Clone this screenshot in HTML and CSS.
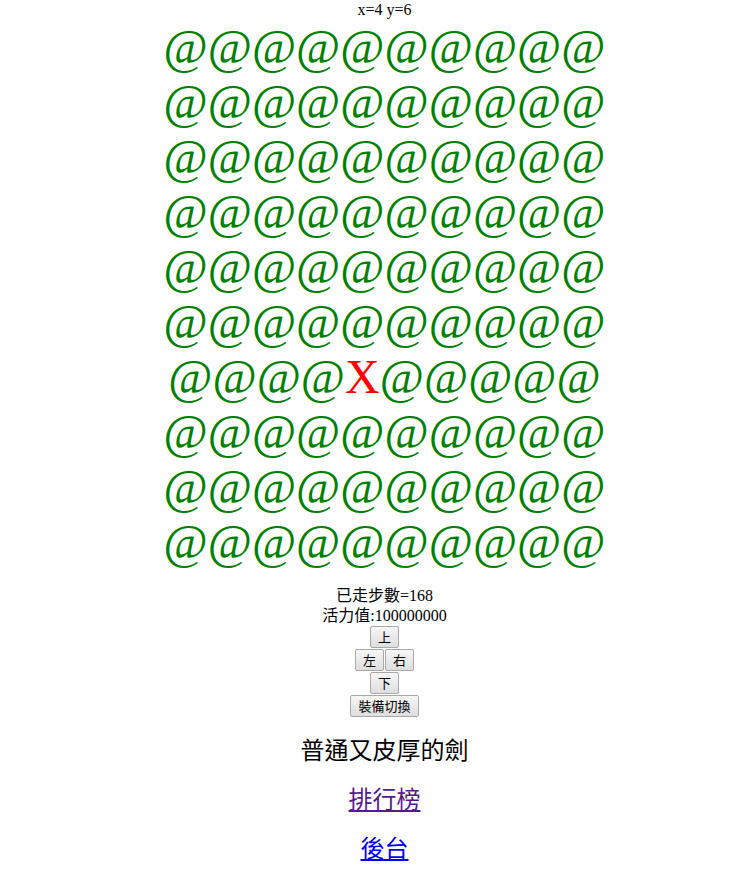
FILE: index.html
```html
<!DOCTYPE html>
<html>
<head>
<meta charset="utf-8">
<link rel="stylesheet" href="styles.css">
</head>
<body>
<div class="page">
  <div class="pos">x=4 y=6</div>
  <div class="grid">
    <div class="row"><span class="c">@</span><span class="c">@</span><span class="c">@</span><span class="c">@</span><span class="c">@</span><span class="c">@</span><span class="c">@</span><span class="c">@</span><span class="c">@</span><span class="c">@</span></div>
    <div class="row"><span class="c">@</span><span class="c">@</span><span class="c">@</span><span class="c">@</span><span class="c">@</span><span class="c">@</span><span class="c">@</span><span class="c">@</span><span class="c">@</span><span class="c">@</span></div>
    <div class="row"><span class="c">@</span><span class="c">@</span><span class="c">@</span><span class="c">@</span><span class="c">@</span><span class="c">@</span><span class="c">@</span><span class="c">@</span><span class="c">@</span><span class="c">@</span></div>
    <div class="row"><span class="c">@</span><span class="c">@</span><span class="c">@</span><span class="c">@</span><span class="c">@</span><span class="c">@</span><span class="c">@</span><span class="c">@</span><span class="c">@</span><span class="c">@</span></div>
    <div class="row"><span class="c">@</span><span class="c">@</span><span class="c">@</span><span class="c">@</span><span class="c">@</span><span class="c">@</span><span class="c">@</span><span class="c">@</span><span class="c">@</span><span class="c">@</span></div>
    <div class="row"><span class="c">@</span><span class="c">@</span><span class="c">@</span><span class="c">@</span><span class="c">@</span><span class="c">@</span><span class="c">@</span><span class="c">@</span><span class="c">@</span><span class="c">@</span></div>
    <div class="row"><span class="c">@</span><span class="c">@</span><span class="c">@</span><span class="c">@</span><span class="me">X</span><span class="c">@</span><span class="c">@</span><span class="c">@</span><span class="c">@</span><span class="c">@</span></div>
    <div class="row"><span class="c">@</span><span class="c">@</span><span class="c">@</span><span class="c">@</span><span class="c">@</span><span class="c">@</span><span class="c">@</span><span class="c">@</span><span class="c">@</span><span class="c">@</span></div>
    <div class="row"><span class="c">@</span><span class="c">@</span><span class="c">@</span><span class="c">@</span><span class="c">@</span><span class="c">@</span><span class="c">@</span><span class="c">@</span><span class="c">@</span><span class="c">@</span></div>
    <div class="row"><span class="c">@</span><span class="c">@</span><span class="c">@</span><span class="c">@</span><span class="c">@</span><span class="c">@</span><span class="c">@</span><span class="c">@</span><span class="c">@</span><span class="c">@</span></div>
  </div>
  <div class="stats">
    <div class="line">已走步數=168</div>
    <div class="line">活力值:100000000</div>
  </div>
  <div class="controls">
    <div class="brow"><button class="btn">上</button></div>
    <div class="brow"><button class="btn">左</button><button class="btn">右</button></div>
    <div class="brow"><button class="btn">下</button></div>
    <div class="brow"><button class="btn">裝備切換</button></div>
  </div>
  <h2 class="title">普通又皮厚的劍</h2>
  <h2 class="title"><a class="link visited" href="#rank">排行榜</a></h2>
  <h2 class="title"><a class="link" href="#admin">後台</a></h2>
</div>
</body>
</html>
```
FILE: styles.css
```css
html, body {
  margin: 0;
  padding: 0;
  background: #fff;
}
.page {
  font-family: "Liberation Serif", "Noto Sans CJK TC", serif;
  font-size: 16px;
  color: #000;
  text-align: center;
  padding-left: 20px;
}
.pos {
  font-size: 16px;
  line-height: 19px;
}
.grid {
  font-size: 48px;
  line-height: 55px;
}
.row {
  white-space: nowrap;
}
.c {
  color: green;
}
.me {
  color: red;
}
.stats {
  margin-top: 17px;
}
.line {
  line-height: 20px;
}
.controls {
  display: flex;
  flex-direction: column;
  align-items: center;
  gap: 1px;
  margin-top: 0;
}
.brow {
  display: flex;
  gap: 1px;
}
.btn {
  font-family: "Noto Sans CJK TC", sans-serif;
  font-size: 13px;
  line-height: 16px;
  padding: 1px 7px;
  height: 22px;
  border: 1px solid #a9a9a9;
  border-radius: 2px;
  background: linear-gradient(#f6f6f6, #dedede);
  color: #000;
}
.title {
  font-size: 24px;
  font-weight: normal;
  line-height: 30px;
  margin: 19px 0;
}
.link {
  color: #0000ee;
  text-decoration: underline;
}
.link.visited {
  color: #551a8b;
}
```
